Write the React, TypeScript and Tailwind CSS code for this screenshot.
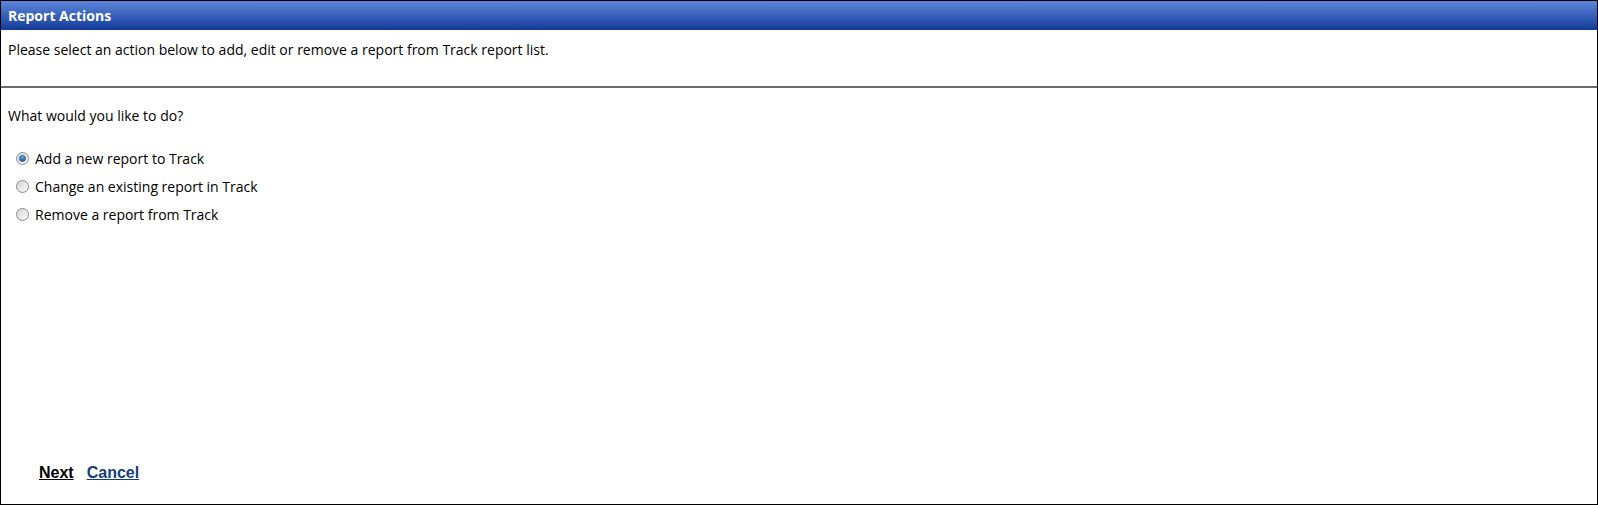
const options = [
  'Add a new report to Track',
  'Change an existing report in Track',
  'Remove a report from Track',
]

const Radio = ({ checked }: { checked: boolean }) => (
  <span className="w-[13px] h-[13px] rounded-full border border-[#8a8a8a] bg-gradient-to-br from-[#d6d6d6] to-[#fafafa] flex items-center justify-center shrink-0">
    {checked ? (
      <span className="w-[7px] h-[7px] rounded-full bg-gradient-to-b from-[#6fb6e8] to-[#1d5f9c] border border-[#1e4f80]" />
    ) : null}
  </span>
)

const App = () => {
  return (
    <div className="w-[1598px] h-[505px] border border-black flex flex-col bg-white font-['Open_Sans',sans-serif] text-[14px] leading-[20px] text-black">
      <div className="h-[29px] shrink-0 bg-gradient-to-b from-[#5d86da] to-[#153a9a] flex items-center px-[7px]">
        <span className="text-white font-bold text-[14px]">Report Actions</span>
      </div>

      <div className="h-[58px] shrink-0 border-b-2 border-[#6b6b6b] px-[7px] pt-[10px]">
        Please select an action below to add, edit or remove a report from Track report list.
      </div>

      <div className="flex-1 flex flex-col px-[7px] pt-[18px]">
        <p>What would you like to do?</p>

        <div className="flex flex-col gap-[9px] mt-[23px] pl-[8px]">
          {options.map((o, i) => (
            <label key={o} className="flex items-center gap-[6px] h-[19px]">
              <Radio checked={i === 0} />
              <span>{o}</span>
            </label>
          ))}
        </div>

        <div className="mt-auto mb-[21px] pl-[31px] flex gap-[13px] font-['Liberation_Sans',sans-serif] font-bold text-[16px] leading-[20px]">
          <a className="underline text-black cursor-pointer">Next</a>
          <a className="underline text-[#123f7a] cursor-pointer">Cancel</a>
        </div>
      </div>
    </div>
  )
}

export default App
